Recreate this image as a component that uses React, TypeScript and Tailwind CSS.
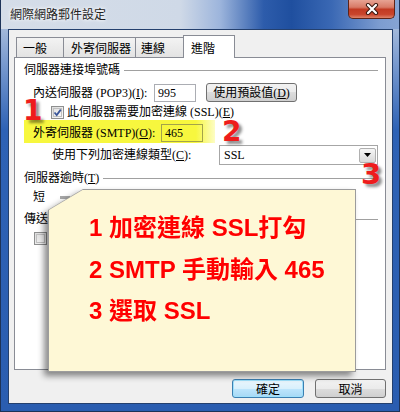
import React from "react";

function CheckBox({ checked }: { checked?: boolean }) {
  return (
    <div className="w-[13px] h-[13px] border border-[#8e8f8f] bg-[linear-gradient(135deg,#dcdcdc,#fbfbfb)] flex items-center justify-center shrink-0">
      <div className="w-[9px] h-[9px] border border-[#c0c0c0] bg-[linear-gradient(135deg,#e2e2e2,#f8f8f8)] relative">
        {checked && (
          <svg width="11" height="11" viewBox="0 0 11 11" className="absolute left-[-2px] top-[-2px]">
            <path d="M2.5 5.5 L4.7 8 L8.8 2.6" fill="none" stroke="#3b5699" strokeWidth="1.8" />
          </svg>
        )}
      </div>
    </div>
  );
}

function GroupHeader({ children }: { children: React.ReactNode }) {
  return (
    <div className="flex items-center h-[16px]">
      <span className="leading-[16px] whitespace-nowrap">{children}</span>
      <div className="flex-1 ml-[4px] h-px bg-[#a0a0a0]" />
    </div>
  );
}

export default function App() {
  return (
    <div className="w-[400px] h-[412px] relative overflow-hidden flex flex-col border-x border-b border-[#1d3358] bg-[linear-gradient(to_bottom,#c6d2e4_0px,#7d9dd0_60px,#2e62b5_130px,#2a5db0_100%)] font-['Liberation_Serif','Noto_Sans_CJK_TC',serif] text-[12px] text-black">
      {/* Title bar */}
      <div className="h-[29px] shrink-0 flex items-start bg-[linear-gradient(to_right,#d5dde8_0%,#cfd9e7_45%,#9db5dc_55%,#2d5cab_66%,#1f4f9f_73%,#3a68b4_83%,#7c9cd0_95%,#86a4d4_100%)]">
        <span className="mt-[6px] ml-[9px] leading-[16px] text-[12px] text-[#222] [text-shadow:0_0_5px_#fff,0_0_3px_#fff] font-['Noto_Sans_CJK_TC',sans-serif]">
          網際網路郵件設定
        </span>
        <div className="ml-auto mr-[4px] w-[47px] h-[19px] rounded-b-[5px] border border-t-0 border-[#5e2418] bg-[linear-gradient(to_bottom,#e7a393_0%,#d87a66_40%,#c23a22_52%,#c9452c_80%,#de846a_100%)] flex items-center justify-center">
          <svg width="16" height="12" viewBox="0 0 16 12">
            <path d="M4 2 L12 10 M12 2 L4 10" stroke="#3a1810" strokeWidth="4.2" strokeLinecap="round" />
            <path d="M4 2 L12 10 M12 2 L4 10" stroke="#ffffff" strokeWidth="2.2" strokeLinecap="round" />
          </svg>
        </div>
      </div>

      {/* Body */}
      <div className="flex-1 flex pl-[7px] pr-[6px] pb-[7px]">
        <div className="flex-1 border border-[#24406e] bg-[#f0f0f0] flex flex-col">
          {/* Tabs */}
          <div className="mt-[5px] ml-[5px] h-[22px] flex items-end relative z-10">
            <div className="ml-[2px] w-[48px] h-[20px] border border-b-0 border-[#898c95] bg-[linear-gradient(to_bottom,#f3f3f3,#e3e3e3)] pl-[6px] leading-[19px] font-['Noto_Sans_CJK_TC',sans-serif]">
              一般
            </div>
            <div className="-ml-px w-[73px] h-[20px] border border-b-0 border-[#898c95] bg-[linear-gradient(to_bottom,#f3f3f3,#e3e3e3)] pl-[7px] leading-[19px] font-['Noto_Sans_CJK_TC',sans-serif]">
              外寄伺服器
            </div>
            <div className="-ml-px w-[49px] h-[20px] border border-b-0 border-[#898c95] bg-[linear-gradient(to_bottom,#f3f3f3,#e3e3e3)] pl-[5px] leading-[19px] font-['Noto_Sans_CJK_TC',sans-serif]">
              連線
            </div>
            <div className="-ml-px w-[52px] h-[23px] -mb-px border border-b-0 border-[#898c95] bg-white pl-[7px] pt-[2px] leading-[19px] font-['Noto_Sans_CJK_TC',sans-serif]">
              進階
            </div>
          </div>

          {/* Panel */}
          <div className="ml-[5px] w-[372px] h-[313px] border border-[#898c95] bg-white pl-[9px] pr-[7px] pt-[4px] flex flex-col">
            <GroupHeader>伺服器連接埠號碼</GroupHeader>

            <div className="mt-[5px] h-[19px] flex items-center pl-[9px]">
              <span className="w-[121px] whitespace-nowrap">
                內送伺服器 (POP3)(<span className="underline">I</span>):
              </span>
              <div className="w-[42px] h-[18px] border border-[#abadb3] bg-white pl-[3px] leading-[16px]">995</div>
              <div className="ml-[10px] w-[91px] h-[19px] rounded-[3px] border border-[#707070] bg-[linear-gradient(to_bottom,#f2f2f2_0%,#ebebeb_50%,#dddddd_50%,#cfcfcf_100%)] flex items-center justify-center leading-[16px]">
                使用預設值(<span className="underline">D</span>)
              </div>
            </div>

            <div className="mt-[2px] h-[16px] flex items-center pl-[27px]">
              <CheckBox checked />
              <span className="ml-[3px] whitespace-nowrap leading-[15px]">
                此伺服器需要加密連線 (SSL)(<span className="underline">E</span>)
              </span>
            </div>

            <div className="h-[23px] w-[191px] flex items-center pl-[9px] pt-[2px] bg-[linear-gradient(to_right,#f7f73e_0%,#f7f73e_90%,rgba(247,247,62,0.3)_100%)]">
              <span className="w-[128px] whitespace-nowrap">
                外寄伺服器 (SMTP)(<span className="underline">O</span>):
              </span>
              <div className="w-[42px] h-[18px] border border-[#a3a34a] pl-[3px] leading-[16px]">465</div>
            </div>

            <div className="mt-[2px] h-[20px] flex items-center pl-[28px]">
              <span className="w-[167px] whitespace-nowrap">
                使用下列加密連線類型(<span className="underline">C</span>):
              </span>
              <div className="flex-1 h-[20px] border border-[#a6a6a6] bg-white flex items-center pl-[4px]">
                <span className="leading-[16px]">SSL</span>
                <div className="ml-auto mr-[1px] w-[17px] h-[15px] border border-[#b0b0b0] rounded-[2px] bg-[linear-gradient(to_bottom,#f6f6f6,#d8d8d8)] flex items-center justify-center">
                  <svg width="7" height="4" viewBox="0 0 7 4">
                    <polygon points="0,0 7,0 3.5,4" fill="#000" />
                  </svg>
                </div>
              </div>
            </div>

            <div className="mt-[5px]">
              <GroupHeader>
                伺服器逾時(<span className="underline">T</span>)
              </GroupHeader>
            </div>

            <div className="mt-[3px] h-[16px] flex items-center pl-[9px]">
              <span className="leading-[16px]">短</span>
              <div className="ml-[15px] w-[10px] h-[3px] bg-[#a8a8a8]" />
            </div>

            <div className="mt-[6px]">
              <GroupHeader>傳送</GroupHeader>
            </div>

            <div className="mt-[5px] h-[13px] flex items-center pl-[10px]">
              <CheckBox />
            </div>
          </div>

          {/* Buttons */}
          <div className="mt-[9px] flex justify-end gap-[11px] pr-[6px]">
            <div className="w-[72px] h-[19px] rounded-[3px] border border-[#3c7fb1] shadow-[inset_0_0_0_1px_#9fe0fb] bg-[linear-gradient(to_bottom,#eaf6fd_0%,#d9f0fc_50%,#bee6fd_50%,#a7d9f5_100%)] flex items-center justify-center leading-[16px] font-['Noto_Sans_CJK_TC',sans-serif]">
              確定
            </div>
            <div className="w-[71px] h-[19px] rounded-[3px] border border-[#707070] bg-[linear-gradient(to_bottom,#f2f2f2_0%,#ebebeb_50%,#dddddd_50%,#cfcfcf_100%)] flex items-center justify-center leading-[16px] font-['Noto_Sans_CJK_TC',sans-serif]">
              取消
            </div>
          </div>
        </div>
      </div>

      {/* Red step numbers */}
      <span className="absolute left-[22px] top-[100px] text-[28px] leading-[22px] font-bold text-[#ee1c1c] font-['DejaVu_Sans',sans-serif] [text-shadow:3px_3px_3px_rgba(0,0,0,0.45)]">
        1
      </span>
      <span className="absolute left-[221px] top-[121px] text-[28px] leading-[22px] font-bold text-[#ee1c1c] font-['DejaVu_Sans',sans-serif] [text-shadow:3px_3px_3px_rgba(0,0,0,0.45)]">
        2
      </span>
      <span className="absolute left-[360px] top-[163px] text-[29px] leading-[22px] font-bold text-[#ee1c1c] font-['DejaVu_Sans',sans-serif] [text-shadow:3px_3px_3px_rgba(0,0,0,0.45)]">
        3
      </span>

      {/* Note */}
      <div className="absolute left-[47px] top-[189px] w-[308px] h-[183px] [filter:drop-shadow(-4px_4px_3px_rgba(0,0,0,0.45))]">
        <div className="absolute inset-0 bg-[#9c9c9c] [clip-path:polygon(35px_0,100%_0,100%_100%,0_100%,0_21px)]" />
        <div className="absolute inset-[1px] bg-[#fef8d6] [clip-path:polygon(33.5px_0,100%_0,100%_100%,0_100%,0_20px)] pl-[40px] pt-[17px] text-[24px] leading-[41.5px] font-bold text-[#ff0000] font-['Liberation_Sans','Noto_Sans_CJK_TC',sans-serif] whitespace-nowrap">
          <div>1 加密連線 SSL打勾</div>
          <div>2 SMTP 手動輸入 465</div>
          <div>3 選取 SSL</div>
        </div>
      </div>
    </div>
  );
}
